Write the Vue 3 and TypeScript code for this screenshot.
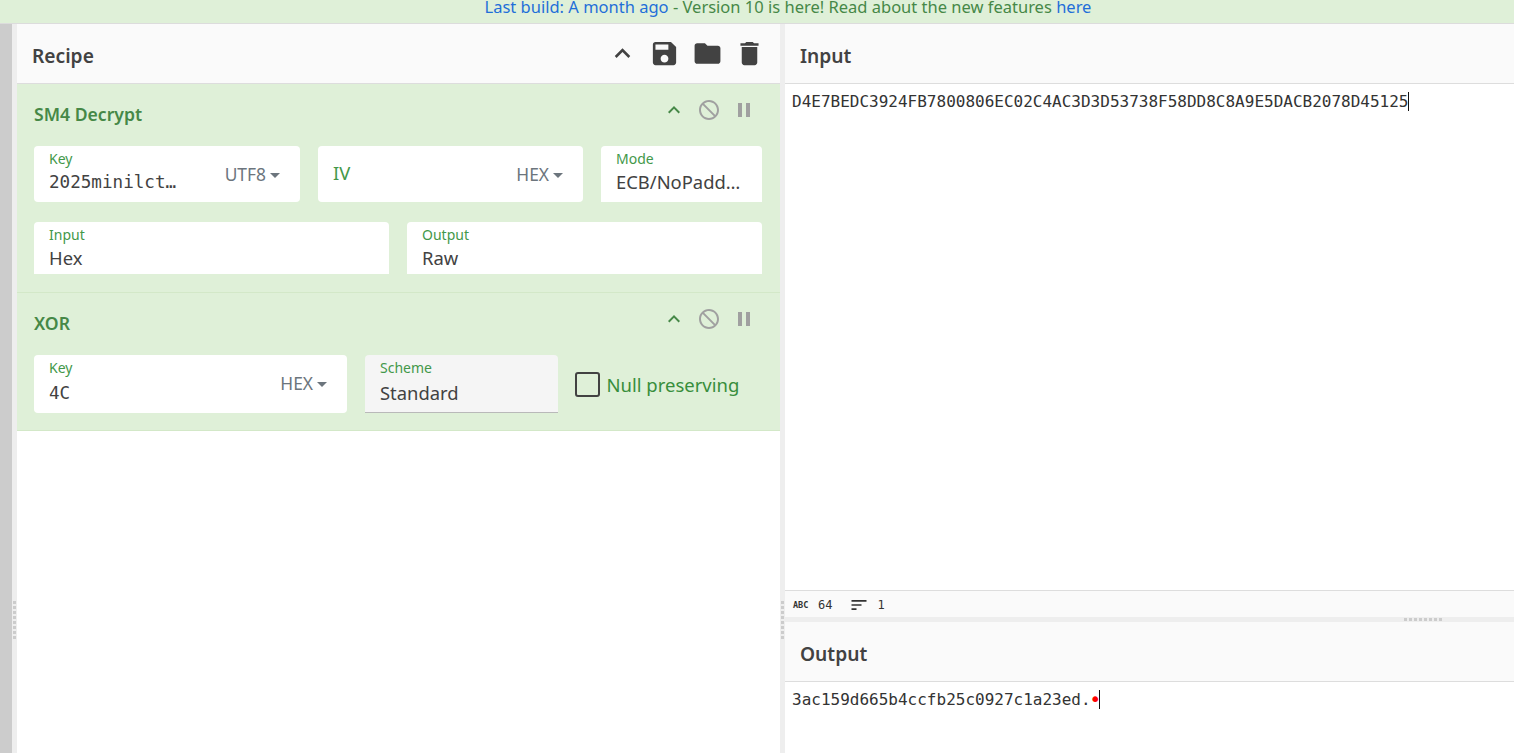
<script setup lang="ts">
const icons: Record<string, string> = {
  up: 'M7.41 15.41L12 10.83l4.59 4.58L18 14l-6-6-6 6z',
  save: 'M17 3H5c-1.11 0-2 .9-2 2v14c0 1.1.89 2 2 2h14c1.1 0 2-.9 2-2V7l-4-4zm-5 16c-1.66 0-3-1.34-3-3s1.34-3 3-3 3 1.34 3 3-1.34 3-3 3zm3-10H5V5h10v4z',
  folder: 'M10 4H4c-1.1 0-1.99.9-1.99 2L2 18c0 1.1.9 2 2 2h16c1.1 0 2-.9 2-2V8c0-1.1-.9-2-2-2h-8l-2-2z',
  trash: 'M6 19c0 1.1.9 2 2 2h8c1.1 0 2-.9 2-2V7H6v12zM19 4h-3.5l-1-1h-5l-1 1H5v2h14V4z',
  ban: 'M12 2C6.48 2 2 6.48 2 12s4.48 10 10 10 10-4.48 10-10S17.52 2 12 2zm0 18c-4.42 0-8-3.58-8-8 0-1.85.63-3.55 1.69-4.9L16.9 18.31C15.55 19.37 13.85 20 12 20zm6.31-3.1L7.1 5.69C8.45 4.63 10.15 4 12 4c4.42 0 8 3.58 8 8 0 1.85-.63 3.55-1.69 4.9z',
  pause: 'M6 19h4V5H6v14zm8-14v14h4V5h-4z',
  sort: 'M3 18h6v-2H3v2zM3 6v2h18V6H3zm0 7h12v-2H3v2z'
}
const headerIcons = ['up', 'save', 'folder', 'trash']
</script>

<template>
  <div class="page">
    <div class="banner">
      <a class="link">Last build: A month ago</a>&nbsp;- Version 10 is here! Read about the new features&nbsp;<a class="link">here</a>
    </div>
    <div class="main">
      <div class="rail"></div>
      <div class="vgutter"><div class="vdots"></div></div>
      <section class="recipe">
        <header class="title-bar">
          <h2 class="panel-title">Recipe</h2>
          <div class="head-icons">
            <svg v-for="n in headerIcons" :key="n" class="head-icon" viewBox="0 0 24 24"><path :d="icons[n]" /></svg>
          </div>
        </header>

        <div class="op">
          <div class="op-head">
            <h3 class="op-title">SM4 Decrypt</h3>
            <div class="op-icons">
              <svg class="op-icon green" viewBox="0 0 24 24"><path :d="icons.up" /></svg>
              <svg class="op-icon" viewBox="0 0 24 24"><path :d="icons.ban" /></svg>
              <svg class="op-icon" viewBox="0 0 24 24"><path :d="icons.pause" /></svg>
            </div>
          </div>
          <div class="row row-sm4">
            <div class="field rounded">
              <div class="field-main">
                <label class="label">Key</label>
                <div class="value mono clip">2025minilctf2025</div>
              </div>
              <span class="drop">UTF8<i class="caret"></i></span>
            </div>
            <div class="field rounded">
              <div class="field-main iv">IV</div>
              <span class="drop">HEX<i class="caret"></i></span>
            </div>
            <div class="field">
              <div class="field-main">
                <label class="label">Mode</label>
                <div class="value clip">ECB/NoPadding</div>
              </div>
            </div>
          </div>
          <div class="row row-io">
            <div class="field short">
              <div class="field-main">
                <label class="label">Input</label>
                <div class="value">Hex</div>
              </div>
            </div>
            <div class="field short">
              <div class="field-main">
                <label class="label">Output</label>
                <div class="value">Raw</div>
              </div>
            </div>
          </div>
        </div>

        <div class="op">
          <div class="op-head">
            <h3 class="op-title">XOR</h3>
            <div class="op-icons">
              <svg class="op-icon green" viewBox="0 0 24 24"><path :d="icons.up" /></svg>
              <svg class="op-icon" viewBox="0 0 24 24"><path :d="icons.ban" /></svg>
              <svg class="op-icon" viewBox="0 0 24 24"><path :d="icons.pause" /></svg>
            </div>
          </div>
          <div class="row row-xor">
            <div class="field tall rounded">
              <div class="field-main">
                <label class="label">Key</label>
                <div class="value mono">4C</div>
              </div>
              <span class="drop">HEX<i class="caret"></i></span>
            </div>
            <div class="field tall select">
              <div class="field-main">
                <label class="label">Scheme</label>
                <div class="value">Standard</div>
              </div>
            </div>
            <label class="check"><i class="box"></i>Null preserving</label>
          </div>
        </div>
      </section>

      <div class="vgutter"><div class="vdots"></div></div>

      <section class="io">
        <div class="io-input">
          <header class="title-bar">
            <h2 class="panel-title">Input</h2>
          </header>
          <div class="editor">
            <div class="code">D4E7BEDC3924FB7800806EC02C4AC3D3D53738F58DD8C8A9E5DACB2078D45125<i class="cursor"></i></div>
          </div>
          <div class="status">
            <span class="abc">ABC</span>
            <span class="stat">64</span>
            <svg class="sort" viewBox="0 0 24 24"><path :d="icons.sort" /></svg>
            <span class="stat">1</span>
          </div>
        </div>
        <div class="hgutter"><div class="hdots"></div></div>
        <div class="io-output">
          <header class="title-bar">
            <h2 class="panel-title">Output</h2>
          </header>
          <div class="editor">
            <div class="code">3ac159d665b4ccfb25c0927c1a23ed.<span class="special">•</span><i class="cursor"></i></div>
          </div>
        </div>
      </section>
    </div>
  </div>
</template>

<style scoped>
.page {
  height: 753px;
  width: 1514px;
  display: flex;
  flex-direction: column;
  overflow: hidden;
  font-family: "Noto Sans", "Open Sans", sans-serif;
  color: #424242;
  background: #fff;
}
.banner {
  height: 24px;
  box-sizing: border-box;
  background: #dff0d8;
  border-bottom: 1px solid #dcdcdc;
  color: #468847;
  font-size: 16.5px;
  line-height: 14px;
  padding-left: 62px;
  display: flex;
  justify-content: center;
  white-space: nowrap;
}
.link { color: #1f6fd8; }
.main { flex: 1; display: flex; min-height: 0; }
.rail { width: 12px; background: #ccc; }
.vgutter { width: 5px; background: #eee; flex: none; padding-top: 577px; box-sizing: border-box; }
.vdots {
  width: 3px;
  height: 40px;
  margin-left: 1px;
  background: repeating-linear-gradient(to bottom, #ccc 0 3px, transparent 3px 5px);
}
.recipe { width: 763px; flex: none; display: flex; flex-direction: column; }
.title-bar {
  height: 60px;
  box-sizing: border-box;
  flex: none;
  background: #fafafa;
  border-bottom: 1px solid #ddd;
  display: flex;
  align-items: center;
  justify-content: space-between;
  padding: 0 15px 0 15px;
}
.panel-title {
  margin: 4px 0 0;
  font-size: 19.2px;
  font-weight: 600;
  color: #424242;
}
.head-icons { display: flex; margin-top: -1px; }
.head-icon { width: 31px; height: 31px; margin-left: 11.5px; fill: #424242; display: block; }
.op {
  background: #dff0d8;
  border-bottom: 1px solid #d3e8c8;
  padding: 0 18px 17px 17px;
}
.op-head { height: 62px; display: flex; justify-content: space-between; }
.op-title {
  margin: 0;
  font-size: 17.6px;
  font-weight: 600;
  color: #468847;
  line-height: 60px;
}
.op-icons { display: flex; gap: 11px; padding: 14px 0 0; margin-right: 6.5px; }
.op-icon { width: 24px; height: 24px; fill: #a0a0a0; display: block; }
.op-icon.green { fill: #468847; }
.row { display: grid; column-gap: 18px; }
.row-sm4 { grid-template-columns: 266px 265px 161px; margin-bottom: 20px; }
.row-io { grid-template-columns: 355px 355px; margin-bottom: 1px; }
.row-xor { grid-template-columns: 313px 193px 1fr; }
.field {
  height: 56px;
  box-sizing: border-box;
  background: #fff;
  border-radius: 4px 4px 0 0;
  padding: 4px 20px 0 15px;
  display: flex;
  align-items: flex-start;
  justify-content: space-between;
  min-width: 0;
}
.field.rounded { border-radius: 4px; }
.field.short { height: 52px; }
.field.tall { height: 58px; }
.field.select {
  background: #f5f5f5;
  border-bottom: 1px solid #b9b9b9;
  padding-right: 10px;
}
.field-main { min-width: 0; flex: 1; }
.label {
  display: block;
  font-size: 14px;
  line-height: 17px;
  color: #43984a;
}
.value {
  font-size: 18.4px;
  line-height: 26px;
  color: #424242;
  margin-top: 2px;
}
.field.tall .value { margin-top: 4px; }
.mono { font-family: "DejaVu Sans Mono", monospace; font-size: 17.6px; }
.field.tall .value.mono { margin-top: 4px; }
.clip { white-space: nowrap; overflow: hidden; text-overflow: ellipsis; }
.mono.clip { width: 134px; }
.iv { font-size: 18.4px; line-height: 46px; color: #43984a; }
.drop {
  font-size: 17.4px;
  line-height: 22px;
  margin-top: 13px;
  color: #6c757d;
  white-space: nowrap;
  flex: none;
}
.caret {
  display: inline-block;
  margin-left: 4px;
  vertical-align: 3px;
  border-top: 5px solid #6c757d;
  border-left: 5px solid transparent;
  border-right: 5px solid transparent;
}
.check {
  display: flex;
  align-items: center;
  color: #388e3c;
  font-size: 18.5px;
  margin: 2px 0 0 -1px;
  height: 54px;
}
.box {
  width: 25px;
  height: 25px;
  box-sizing: border-box;
  border: 2px solid #424242;
  border-radius: 3px;
  margin-right: 6.5px;
  flex: none;
}
.io { flex: 1; min-width: 0; display: flex; flex-direction: column; }
.io-input { height: 593px; display: flex; flex-direction: column; }
.io-output { flex: 1; display: flex; flex-direction: column; }
.editor { flex: 1; padding: 8px 0 0 7px; }
.code {
  font-family: "DejaVu Sans Mono", monospace;
  font-size: 16px;
  line-height: 19px;
  color: #333;
  white-space: nowrap;
}
.special {
  display: inline-block;
  width: 9.63px;
  text-indent: -1.5px;
  color: #f00;
  font-size: 20px;
  line-height: 19px;
  vertical-align: top;
}
.cursor {
  display: inline-block;
  width: 1px;
  height: 19px;
  margin-left: -1px;
  background: #111;
  vertical-align: top;
}
.status {
  height: 27px;
  box-sizing: border-box;
  background: #fafafa;
  border-top: 1px solid #ddd;
  display: flex;
  align-items: center;
  padding: 1px 0 0 8px;
  flex: none;
  font-family: "DejaVu Sans Mono", monospace;
  color: #333;
}
.abc { font-size: 8.5px; font-weight: 700; width: 25px; font-family: "DejaVu Sans Mono", monospace; }
.stat { font-size: 12px; }
.sort { width: 20px; height: 20px; fill: #333; margin: 0 8px 0 17px; }
.hgutter {
  height: 5px;
  flex: none;
  background: #eee;
  display: flex;
  justify-content: flex-end;
  align-items: center;
  padding-right: 70px;
}
.hdots {
  width: 40px;
  height: 3px;
  background: repeating-linear-gradient(to right, #ccc 0 3px, transparent 3px 5px);
}
</style>

<style>
html, body { margin: 0; overflow: hidden; }
</style>
